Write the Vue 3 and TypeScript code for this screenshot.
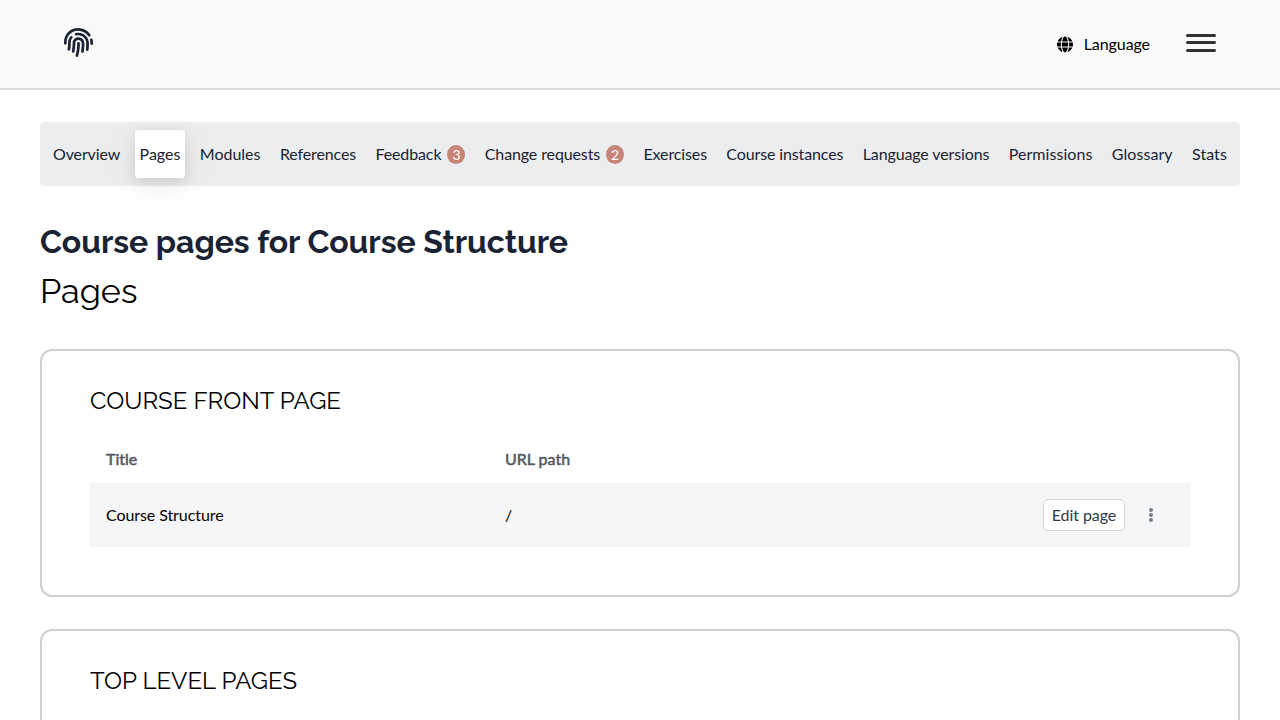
<script setup lang="ts">
interface Tab {
  label: string
  count?: number
  active?: boolean
}

const tabs: Tab[] = [
  { label: 'Overview' },
  { label: 'Pages', active: true },
  { label: 'Modules' },
  { label: 'References' },
  { label: 'Feedback', count: 3 },
  { label: 'Change requests', count: 2 },
  { label: 'Exercises' },
  { label: 'Course instances' },
  { label: 'Language versions' },
  { label: 'Permissions' },
  { label: 'Glossary' },
  { label: 'Stats' },
]
</script>

<template>
  <div class="page">
    <header class="topbar">
      <svg class="logo" viewBox="0 0 512 512" fill="currentColor">
        <path d="M256.12 245.96c-13.25 0-24 10.74-24 24 1.14 72.25-8.14 141.9-27.7 211.55-2.73 9.72 2.15 30.49 23.12 30.49 10.48 0 20.11-6.92 23.09-17.52 13.53-47.91 31.04-125.41 29.48-224.52.01-13.25-10.73-24-23.99-24zm-.86-81.73C194 164.16 151.25 211.3 152.1 265.32c.75 47.94-3.75 95.91-13.37 142.55-2.69 12.98 5.67 25.69 18.64 28.36 13.05 2.67 25.67-5.66 28.36-18.64 10.34-50.09 15.17-101.58 14.37-153.02-.41-25.95 19.92-52.49 54.45-52.34 31.31.47 57.15 25.34 57.62 55.47.77 48.05-2.81 96.33-10.61 143.55-2.17 13.06 6.69 25.42 19.76 27.58 19.97 3.33 26.81-15.1 27.58-19.77 8.28-50.03 12.06-101.21 11.27-152.11-.88-55.8-47.94-101.88-104.91-102.72zm-110.69-19.78c-10.3-8.34-25.37-6.8-33.76 3.48-25.62 31.5-39.39 71.28-38.75 112 .59 37.58-2.47 75.27-9.11 112.05-2.34 13.05 6.31 25.53 19.36 27.89 20.11 3.5 27.07-14.81 27.89-19.36 7.19-39.84 10.5-80.66 9.86-121.33-.47-29.88 9.2-57.88 28-80.97 8.35-10.28 6.79-25.39-3.49-33.76zm109.47-62.33c-15.41-.41-30.87 1.44-45.78 4.97-12.89 3.06-20.87 15.98-17.83 28.89 3.06 12.89 16 20.83 28.89 17.83 11.05-2.61 22.47-3.77 34-3.69 75.43 1.13 137.73 61.5 138.88 134.58.59 37.88-1.28 76.11-5.58 113.63-1.5 13.17 7.95 25.08 21.11 26.58 16.72 1.95 25.51-11.88 26.58-21.11a929.06 929.06 0 0 0 5.89-119.85c-1.56-98.75-85.07-180.33-186.16-181.83zm252.07 121.45c-2.86-12.92-15.51-21.2-28.61-18.27-12.94 2.86-21.12 15.66-18.26 28.61 4.71 21.41 4.91 37.41 4.7 61.6-.11 13.27 10.55 24.09 23.8 24.2h.2c13.17 0 23.89-10.61 24-23.8.18-22.18.4-44.11-5.83-72.34zm-40.12-90.72C417.29 43.46 337.6 1.29 252.81.02 183.02-.82 118.47 24.91 70.46 72.94 24.09 119.37-.9 181.04.14 246.65l-.12 21.47c-.39 13.25 10.03 24.31 23.28 24.69.23.02.48.02.72.02 12.92 0 23.59-10.3 23.97-23.3l.16-23.64c-.83-52.5 19.16-101.86 56.28-139 38.76-38.8 91.34-59.67 147.68-58.86 69.45 1.03 134.73 35.56 174.62 92.39 7.61 10.86 22.56 13.45 33.42 5.86 10.84-7.62 13.46-22.59 5.84-33.43z" />
      </svg>
      <button class="language">
        <svg class="globe" viewBox="0 0 496 512" fill="currentColor">
          <path d="M336.5 160C322 70.7 287.8 8 248 8s-74 62.7-88.5 152h177zM152 256c0 22.2 1.2 43.5 3.3 64h185.3c2.1-20.5 3.3-41.8 3.3-64s-1.2-43.5-3.3-64H155.3c-2.1 20.5-3.3 41.8-3.3 64zm324.7-96c-28.6-67.9-86.5-120.4-158-141.6 24.4 33.8 41.2 84.7 50 141.6h108zM177.2 18.4C105.8 39.6 47.8 92.1 19.3 160h108c8.7-56.9 25.5-107.8 49.9-141.6zM487.4 192H372.7c2.1 21 3.3 42.5 3.3 64s-1.2 43-3.3 64h114.6c5.5-20.5 8.6-41.8 8.6-64s-3.1-43.5-8.5-64zM120 256c0-21.5 1.2-43 3.3-64H8.6C3.2 212.5 0 233.8 0 256s3.2 43.5 8.6 64h114.6c-2-21-3.2-42.5-3.2-64zm39.5 96c14.5 89.3 48.7 152 88.5 152s74-62.7 88.5-152h-177zm159.3 141.6c71.4-21.2 129.4-73.7 158-141.6h-108c-8.8 56.9-25.6 107.8-50 141.6zM19.3 352c28.6 67.9 86.5 120.4 157.9 141.6-24.4-33.8-41.2-84.7-49.9-141.6h-108z" />
        </svg>
        <span>Language</span>
      </button>
      <button class="menu" aria-label="Menu">
        <svg width="30" height="18" viewBox="0 0 30 18" fill="#333">
          <rect width="30" height="3" rx="1.5" />
          <rect y="7" width="30" height="3" rx="1.5" />
          <rect y="15" width="30" height="3" rx="1.5" />
        </svg>
      </button>
    </header>

    <main class="content">
      <nav class="tabs">
        <a v-for="tab in tabs" :key="tab.label" class="tab" :class="{ active: tab.active }">
          {{ tab.label }}<span v-if="tab.count" class="count">{{ tab.count }}</span>
        </a>
      </nav>

      <h1 class="title">Course pages for Course Structure</h1>
      <h2 class="subtitle">Pages</h2>

      <section class="card">
        <h3 class="card-title">COURSE FRONT PAGE</h3>
        <div class="row head">
          <span>Title</span>
          <span>URL path</span>
        </div>
        <div class="row entry">
          <span>Course Structure</span>
          <span>/</span>
          <div class="actions">
            <button class="edit">Edit page</button>
            <button class="more" aria-label="More">
              <svg width="16" height="16" viewBox="0 0 16 16" fill="#767b85">
                <circle cx="8" cy="3" r="2" />
                <circle cx="8" cy="8" r="2" />
                <circle cx="8" cy="13" r="2" />
              </svg>
            </button>
          </div>
        </div>
      </section>

      <section class="card">
        <h3 class="card-title">TOP LEVEL PAGES</h3>
      </section>
    </main>
  </div>
</template>

<style>
body {
  margin: 0;
  background: #fff;
}
</style>

<style scoped>
.page {
  height: 720px;
  overflow: hidden;
  font-family: Lato, 'Open Sans', sans-serif;
  font-size: 16px;
  line-height: 24px;
  letter-spacing: -0.08px;
  color: #000;
}
button {
  border: 0;
  padding: 0;
  background: none;
  color: inherit;
  font: inherit;
  letter-spacing: inherit;
}
svg {
  display: block;
}
.topbar {
  box-sizing: border-box;
  height: 90px;
  padding: 0 64px;
  display: flex;
  align-items: center;
  background: #f9f9f9;
  border-bottom: 2px solid #dadada;
}
.logo {
  width: 29px;
  height: 29px;
  margin: 0 auto 3px 0;
  color: #1a2333;
}
.language {
  display: flex;
  align-items: center;
  gap: 11px;
  margin-right: 36px;
}
.globe {
  width: 16px;
  height: 17px;
}
.menu {
  margin-bottom: 2px;
}
.content {
  padding: 32px 40px 0;
}
.tabs {
  box-sizing: border-box;
  height: 64px;
  padding: 8px;
  display: flex;
  justify-content: space-between;
  background: #ebedee;
  border-radius: 4px;
  color: #1a2333;
}
.tab {
  display: flex;
  align-items: center;
  padding: 0 5px;
  border-radius: 4px;
  white-space: nowrap;
  letter-spacing: -0.12px;
}
.tab:nth-child(2),
.tab:nth-child(3) {
  letter-spacing: 0;
}
.tab:nth-child(n + 10) {
  letter-spacing: 0.06px;
}
.tab.active {
  background: #fff;
  box-shadow: 0 8px 32px rgba(0, 0, 0, 0.08), 0 3px 12px rgba(0, 0, 0, 0.09);
}
.count {
  width: 18px;
  height: 19px;
  margin-left: 6px;
  border-radius: 50%;
  background: #c78478;
  color: #fff;
  font-size: 14px;
  line-height: 19px;
  text-align: center;
}
h1,
h2,
h3 {
  margin: 0;
  font-family: Raleway, Lato, sans-serif;
  font-weight: 400;
  letter-spacing: 0;
}
.title {
  margin-top: 36px;
  font-size: 32px;
  line-height: 40px;
  font-weight: 700;
  letter-spacing: -0.04px;
  white-space: nowrap;
  color: #1a2333;
}
.subtitle {
  margin-top: 8px;
  font-size: 34.2px;
  line-height: 42px;
}
.card {
  box-sizing: border-box;
  height: 248px;
  margin-bottom: 32px;
  padding: 32px 48px;
  border: 2px solid #cdd0d3;
  border-radius: 12px;
}
.subtitle + .card {
  margin-top: 37px;
}
.card-title {
  font-size: 24px;
  line-height: 36px;
  white-space: nowrap;
}
.row {
  display: grid;
  grid-template-columns: 399px 1fr auto;
  align-items: center;
  padding: 0 16px;
}
.head {
  height: 48px;
  margin-top: 16px;
  color: #535a66;
  letter-spacing: 0;
  -webkit-text-stroke: 0.55px #535a66;
}
.entry {
  height: 64px;
  background: #f5f6f7;
}
.actions {
  display: flex;
  align-items: center;
  gap: 18px;
  margin-right: 15px;
}
.edit {
  box-sizing: border-box;
  width: 82px;
  height: 32px;
  border: 1px solid #d5d9dd;
  border-radius: 5px;
  background: #fff;
  color: #313947;
}
</style>
